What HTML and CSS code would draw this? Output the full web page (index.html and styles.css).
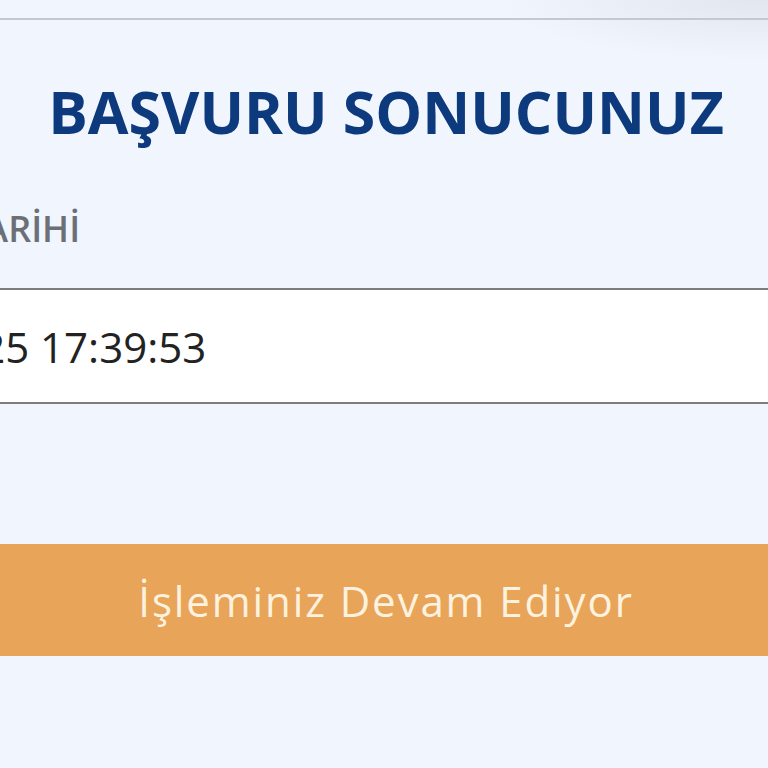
FILE: index.html
```html
<!DOCTYPE html>
<html lang="tr">
<head>
<meta charset="utf-8">
<link rel="stylesheet" href="styles.css">
</head>
<body>
<div class="page">
  <div class="topline"></div>
  <h1 class="title">BAŞVURU SONUCUNUZ</h1>
  <div class="field">
    <div class="label">TARİHİ</div>
    <div class="input">12.05.2025 17:39:53</div>
  </div>
  <div class="status">İşleminiz Devam Ediyor</div>
</div>
</body>
</html>
```
FILE: styles.css
```css
html, body {
  margin: 0;
  padding: 0;
  width: 768px;
  height: 768px;
  overflow: hidden;
  background: #f0f5fe;
}
body {
  font-family: "Open Sans", "Noto Sans", sans-serif;
  background: radial-gradient(ellipse 260px 60px at 760px 0px, #e2e7ef, rgba(240, 245, 254, 0)), #f0f5fe;
}
.page {
  width: 1172px;
  margin-left: -200px;
  padding-top: 18px;
}
.topline {
  height: 2px;
  background: #c3c8d1;
}
.title {
  margin: 0;
  padding-top: 50px;
  text-align: center;
  font-size: 59px;
  line-height: 82px;
  font-weight: 700;
  color: #0c3a7c;
}
.field {
  margin-top: 52px;
}
.label {
  padding-left: 164px;
  font-size: 36px;
  line-height: 50px;
  font-weight: 600;
  color: #6c7076;
}
.input {
  margin-top: 34px;
  background: #fff;
  border-top: 2px solid #7a7c7e;
  border-bottom: 2px solid #7a7c7e;
  height: 116px;
  box-sizing: border-box;
  display: flex;
  align-items: center;
  padding-left: 15px;
  font-family: "Open Sans", "Noto Sans", sans-serif;
  font-size: 42px;
  color: #222;
}
.status {
  margin-top: 140px;
  height: 112px;
  background: #e8a459;
  display: flex;
  align-items: center;
  justify-content: center;
  font-size: 42px;
  letter-spacing: 1.9px;
  color: #fdf2df;
}
```
